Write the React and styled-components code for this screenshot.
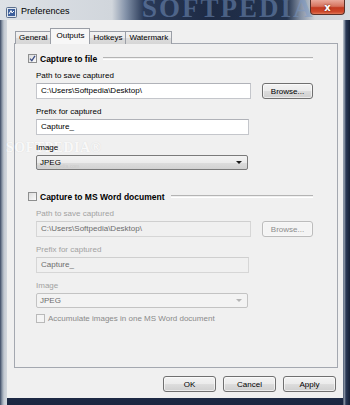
import React from "react";
import styled, { createGlobalStyle, css } from "styled-components";

const GlobalStyle = createGlobalStyle`
  html, body {
    margin: 0;
    padding: 0;
    background: #1c2638;
  }
  body {
    font-family: "Liberation Sans", Arial, sans-serif;
    font-size: 8px;
    color: #000;
  }
`;

const Window = styled.div`
  position: relative;
  width: 350px;
  height: 405px;
  box-sizing: border-box;
  display: flex;
  flex-direction: column;
  padding: 0 7px 7px 7px;
  overflow: hidden;
  background:
    linear-gradient(90deg, #3a4862 0px, #8a96a6 2px, #c4cad2 4px, #d3d8de 7px, transparent 7px, transparent 343px, #9aa5b3 344px, #2a3956 346px, #152036 350px),
    linear-gradient(180deg, #cfd4da 0px, #2a3a58 360px, #1a2640 405px);
`;

const TitleBar = styled.div`
  position: relative;
  height: 20px;
  flex: none;
  margin: 0 -7px;
  padding: 0 5px 0 6px;
  display: flex;
  align-items: flex-start;
  overflow: hidden;
  background: linear-gradient(90deg, #dde1e6 0%, #d1d6dc 32%, #8291a8 36%, #2a3a58 41%, #1d2a44 60%, #24344f 82%, #8793a6 86%, #cdd2d8 90%, #d6dade 100%);
`;

const TitleWatermark = styled.span`
  position: absolute;
  left: 142px;
  top: -7px;
  font-family: "Liberation Serif", serif;
  font-weight: bold;
  font-size: 27px;
  letter-spacing: 2px;
  color: rgba(120, 150, 195, 0.5);
  pointer-events: none;
`;

const AppIcon = styled.svg`
  margin-top: 7px;
  width: 11px;
  height: 11px;
  flex: none;
`;

const Title = styled.span`
  position: relative;
  margin: 6px 0 0 4px;
  font-size: 9px;
  line-height: 10px;
  color: #000;
`;

const CloseButton = styled.div`
  position: relative;
  margin-left: auto;
  width: 35px;
  height: 15px;
  box-sizing: border-box;
  border: 1px solid #5a3028;
  border-top: none;
  border-radius: 0 0 4px 4px;
  background: linear-gradient(180deg, #e9a99b 0%, #d6735e 45%, #c23a20 55%, #cf4a2c 85%, #e07a5a 100%);
  display: flex;
  align-items: center;
  justify-content: center;
  color: #fff;
  font-family: "DejaVu Sans", sans-serif;
  font-weight: bold;
  font-size: 10px;
  text-shadow: 0 0 2px #5a1a10;
`;

const Client = styled.div`
  position: relative;
  flex: 1;
  display: flex;
  flex-direction: column;
  background: #f0f0f0;
`;

const TabRow = styled.div`
  display: flex;
  align-items: flex-end;
  height: 24px;
  padding-left: 8px;
  margin-bottom: -1px;
  position: relative;
  z-index: 1;
`;

const Tab = styled.div`
  box-sizing: border-box;
  height: 13px;
  padding: 0 3px;
  border: 1px solid #9a9ea6;
  border-bottom: none;
  margin-right: -1px;
  line-height: 12px;
  font-size: 8px;
  color: #000;
  background: linear-gradient(180deg, #f2f2f2 0%, #ebebeb 50%, #dcdcdc 51%, #d6d6d6 100%);
  ${(p) =>
    p.$active &&
    css`
      height: 16px;
      padding: 0 5px;
      line-height: 14px;
      background: #f7f7f7;
      position: relative;
      z-index: 2;
    `}
`;

const Panel = styled.div`
  position: relative;
  height: 325px;
  margin: 0 5px 0 7px;
  box-sizing: border-box;
  border: 1px solid #a4a8b0;
  background: #f0f0f0;
  padding: 9px 24px 0 13px;
  display: flex;
  flex-direction: column;
`;

const GroupHeader = styled.div`
  display: flex;
  align-items: center;
  height: 11px;
  margin-top: ${(p) => p.$top || 0}px;
`;

const HeaderText = styled.span`
  margin-left: 3px;
  font-weight: bold;
  font-size: 8.5px;
  white-space: nowrap;
`;

const HeaderLine = styled.div`
  flex: 1;
  margin-left: 6px;
  height: 1px;
  border-top: 1px solid #b4b4b4;
  border-bottom: 1px solid #ffffff;
`;

const Check = styled.div`
  box-sizing: border-box;
  width: 9px;
  height: 9px;
  flex: none;
  border: 1px solid ${(p) => (p.$disabled ? "#b9b9b9" : "#8e8f8f")};
  background: ${(p) =>
    p.$disabled ? "#f4f4f4" : "linear-gradient(135deg, #dcdcdc, #fbfbfb)"};
  display: flex;
  align-items: center;
  justify-content: center;
`;

const Fields = styled.div`
  display: flex;
  flex-direction: column;
  padding-left: 8px;
`;

const Label = styled.div`
  position: relative;
  height: 11px;
  line-height: 11px;
  margin-top: ${(p) => p.$top}px;
  margin-bottom: 2px;
  font-size: 8px;
  color: ${(p) => (p.$disabled ? "#a2a2a2" : "#000")};
`;

const Row = styled.div`
  display: flex;
  align-items: center;
`;

const TextInput = styled.div`
  box-sizing: border-box;
  width: ${(p) => p.$w}px;
  height: 16px;
  padding-left: 4px;
  border: 1px solid ${(p) => (p.$disabled ? "#d6d6d6" : "#c4c6cb")};
  border-top-color: ${(p) => (p.$disabled ? "#cfcfcf" : "#b0b2b8")};
  background: ${(p) => (p.$disabled ? "#f0f0f0" : "#fff")};
  line-height: 14px;
  font-size: 8px;
  color: ${(p) => (p.$disabled ? "#6d6d6d" : "#000")};
  white-space: nowrap;
`;

const Button = styled.div`
  box-sizing: border-box;
  width: ${(p) => p.$w || 53}px;
  height: 16px;
  margin-left: ${(p) => p.$ml || 0}px;
  border: 1px solid ${(p) => (p.$disabled ? "#bcbcbc" : "#707070")};
  border-radius: 3px;
  background: ${(p) =>
    p.$disabled
      ? "#f4f4f4"
      : "linear-gradient(180deg, #f3f3f3 0%, #ebebeb 50%, #dddddd 51%, #cfcfcf 100%)"};
  box-shadow: inset 0 0 0 1px ${(p) => (p.$disabled ? "#f7f7f7" : "rgba(255,255,255,0.6)")};
  display: flex;
  align-items: center;
  justify-content: center;
  font-size: 8px;
  color: ${(p) => (p.$disabled ? "#8d8d8d" : "#000")};
`;

const Combo = styled.div`
  box-sizing: border-box;
  width: 212px;
  height: 15px;
  padding: 0 5px 0 3px;
  border: 1px solid ${(p) => (p.$disabled ? "#c3c3c3" : "#7a7a7a")};
  border-radius: 2px;
  background: ${(p) =>
    p.$disabled
      ? "#f3f3f3"
      : "linear-gradient(180deg, #f3f3f3 0%, #ebebeb 50%, #dddddd 51%, #d1d1d1 100%)"};
  display: flex;
  align-items: center;
  justify-content: space-between;
  font-size: 8px;
  color: ${(p) => (p.$disabled ? "#6d6d6d" : "#000")};
`;

const Arrow = styled.span`
  width: 0;
  height: 0;
  border-left: 3px solid transparent;
  border-right: 3px solid transparent;
  border-top: 3px solid ${(p) => (p.$disabled ? "#b5b5b5" : "#1a1a1a")};
`;

const CheckRow = styled.div`
  display: flex;
  align-items: center;
  height: 11px;
  margin-top: 5px;
`;

const CheckText = styled.span`
  margin-left: 3px;
  font-size: 8px;
  color: #8a8a8a;
  white-space: nowrap;
`;

const PanelWatermark = styled.div`
  position: absolute;
  left: -9px;
  top: 97px;
  font-family: "Liberation Serif", serif;
  font-weight: bold;
  font-size: 14px;
  line-height: 14px;
  letter-spacing: 0.5px;
  color: rgba(255, 255, 255, 0.85);
  text-shadow: 0 0 1px rgba(150, 150, 150, 0.3);
  pointer-events: none;
  small {
    display: block;
    margin: 8px 0 0 30px;
    font-family: "Liberation Sans", sans-serif;
    font-weight: normal;
    font-size: 5px;
    line-height: 6px;
    letter-spacing: 0;
    color: rgba(190, 190, 190, 0.5);
    text-shadow: none;
  }
`;

const ButtonBar = styled.div`
  display: flex;
  justify-content: flex-end;
  gap: 7px;
  margin-top: 8px;
  padding-right: 7px;
`;

function CheckMark() {
  return (
    <svg width="7" height="7" viewBox="0 0 7 7">
      <path d="M1 3.6 L2.8 5.6 L6 0.8" fill="none" stroke="#3d4f86" strokeWidth="1.3" />
    </svg>
  );
}

function Group({ title, checked, disabled, top }) {
  return (
    <>
      <GroupHeader $top={top}>
        <Check $disabled={false}>{checked && <CheckMark />}</Check>
        <HeaderText>{title}</HeaderText>
        <HeaderLine />
      </GroupHeader>
      <Fields>
        <Label $top={6} $disabled={disabled}>Path to save captured</Label>
        <Row>
          <TextInput $w={215} $disabled={disabled}>
            C:\Users\Softpedia\Desktop\
          </TextInput>
          <Button $w={51} $ml={11} $disabled={disabled}>
            Browse...
          </Button>
        </Row>
        <Label $top={7} $disabled={disabled}>Prefix for captured</Label>
        <TextInput $w={213} $disabled={disabled}>
          Capture_
        </TextInput>
        <Label $top={7} $disabled={disabled}>Image</Label>
        <Combo $disabled={disabled}>
          <span>JPEG</span>
          <Arrow $disabled={disabled} />
        </Combo>
        {disabled && (
          <CheckRow>
            <Check $disabled />
            <CheckText>Accumulate images in one MS Word document</CheckText>
          </CheckRow>
        )}
      </Fields>
    </>
  );
}

const tabs = ["General", "Outputs", "Hotkeys", "Watermark"];

export default function App() {
  return (
    <>
      <GlobalStyle />
      <Window>
        <TitleBar>
          <TitleWatermark>SOFTPEDIA</TitleWatermark>
          <AppIcon viewBox="0 0 11 11">
            <rect x="0.5" y="0.5" width="10" height="10" rx="1" fill="#dfe6ef" stroke="#5b6e8c" />
            <rect x="2" y="2" width="7" height="7" fill="#3d5f9c" />
            <path d="M3 7 L5 3.5 L6 6 L8 4" fill="none" stroke="#ffffff" strokeWidth="1" />
          </AppIcon>
          <Title>Preferences</Title>
          <CloseButton>x</CloseButton>
        </TitleBar>
        <Client>
          <TabRow>
            {tabs.map((t) => (
              <Tab key={t} $active={t === "Outputs"}>
                {t}
              </Tab>
            ))}
          </TabRow>
          <Panel>
            <PanelWatermark>
              SOFTPEDIA®
              <small>www.softpedia.com</small>
            </PanelWatermark>
            <Group title="Capture to file" checked />
            <Group title="Capture to MS Word document" disabled top={21} />
          </Panel>
          <ButtonBar>
            <Button>OK</Button>
            <Button>Cancel</Button>
            <Button>Apply</Button>
          </ButtonBar>
        </Client>
      </Window>
    </>
  );
}
